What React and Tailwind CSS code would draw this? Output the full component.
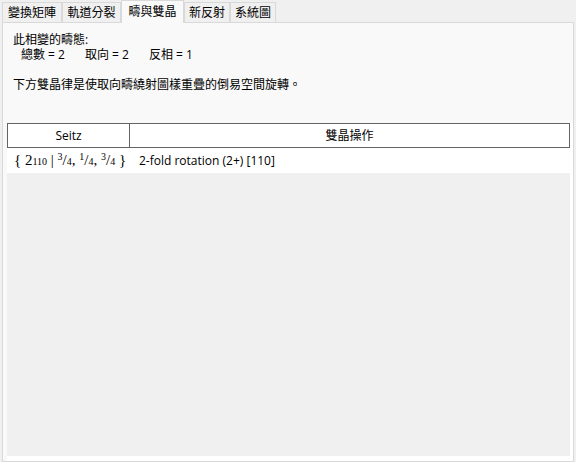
import React from "react";

const cjk = { fontFamily: '"Open Sans", "Noto Sans CJK TC", sans-serif' };
const serif = { fontFamily: '"Liberation Serif", "DejaVu Serif", serif' };

function Tab({ label, w, selected }) {
  if (selected) {
    return (
      <div
        className={`relative z-10 -mb-px h-[23px] ${w} flex items-center justify-center border border-b-0 border-[#d9d9d9] bg-[#f9f9f9] text-[12px] text-black`}
      >
        <span className="-mt-px">{label}</span>
      </div>
    );
  }
  return (
    <div
      className={`h-[20px] ${w} flex items-center justify-center border border-b-0 border-[#d9d9d9] bg-[#f0f0f0] text-[12px] text-black`}
    >
      {label}
    </div>
  );
}

function Frac({ n, d }) {
  return (
    <span className="inline-flex items-baseline">
      <span className="relative -top-[5px] text-[10px]">{n}</span>
      <span className="text-[15px]">/</span>
      <span className="text-[10px]">{d}</span>
    </span>
  );
}

export default function App() {
  return (
    <div className="w-[576px] h-[462px] bg-[#f0f0f0] overflow-hidden" style={cjk}>
      <div className="flex items-end h-[22px] pl-[2px]">
        <Tab label="變換矩陣" w="w-[60px]" />
        <Tab label="軌道分裂" w="w-[59px]" />
        <Tab label="疇與雙晶" w="w-[63px]" selected />
        <Tab label="新反射" w="w-[46px]" />
        <Tab label="系統圖" w="w-[46px]" />
      </div>
      <div className="ml-[2px] w-[572px] h-[440px] border border-[#d9d9d9] bg-[#f9f9f9] flex flex-col pl-[4px] pt-[9px]">
        <div className="pl-[6px] text-[12px] leading-[15px] text-black">
          <div>此相變的疇態:</div>
          <div className="flex gap-[20px] pl-[8px] whitespace-pre">
            <span>總數 = 2</span>
            <span>取向 = 2</span>
            <span>反相 = 1</span>
          </div>
          <div>&nbsp;</div>
          <div>下方雙晶律是使取向疇繞射圖樣重疊的倒易空間旋轉。</div>
        </div>
        <div className="mt-[31px] flex-1 bg-white flex flex-col pr-[3px] pb-[5px]">
          <div className="flex-1 bg-[#f0f0f0] flex flex-col">
            <div className="flex h-[25px] border border-[#646464] bg-white text-[12px] text-black">
              <div className="w-[122px] flex items-center justify-center border-r border-[#646464]">Seitz</div>
              <div className="flex-1 flex items-center justify-center">雙晶操作</div>
            </div>
            <div className="flex h-[25px] bg-white text-black items-center">
              <div className="w-[123px] pl-[7px] whitespace-pre text-[15px] leading-[18px]" style={serif}>
                <span>{"{ "}</span>
                <span>2</span>
                <span className="text-[10px]">110</span>
                <span>{" | "}</span>
                <Frac n="3" d="4" />
                <span>{", "}</span>
                <Frac n="1" d="4" />
                <span>{", "}</span>
                <Frac n="3" d="4" />
                <span>{" }"}</span>
              </div>
              <div className="pl-[9px] text-[12px]">2-fold rotation (2+) [110]</div>
            </div>
          </div>
        </div>
      </div>
    </div>
  );
}
